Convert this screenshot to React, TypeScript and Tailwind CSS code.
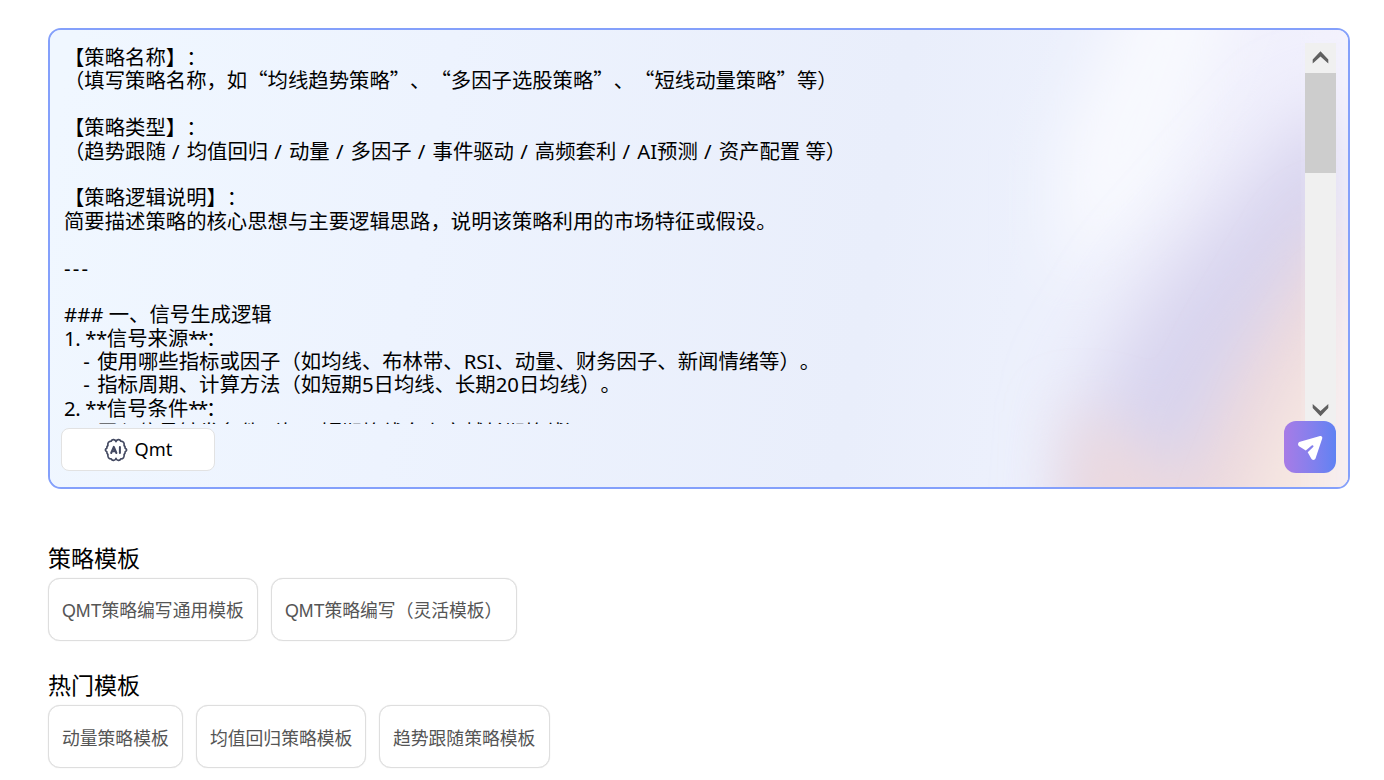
import React from 'react';

const LINES: string[] = [
  '【策略名称】：',
  '（填写策略名称，如“均线趋势策略”、“多因子选股策略”、“短线动量策略”等）',
  '',
  '【策略类型】：',
  '（趋势跟随 / 均值回归 / 动量 / 多因子 / 事件驱动 / 高频套利 / AI预测 / 资产配置 等）',
  '',
  '【策略逻辑说明】：',
  '简要描述策略的核心思想与主要逻辑思路，说明该策略利用的市场特征或假设。',
  '',
  '---',
  '',
  '### 一、信号生成逻辑',
  '1. **信号来源**：',
  '   - 使用哪些指标或因子（如均线、布林带、RSI、动量、财务因子、新闻情绪等）。',
  '   - 指标周期、计算方法（如短期5日均线、长期20日均线）。',
  '2. **信号条件**：',
  '   - 买入信号触发条件（如：短期均线向上穿越长期均线）',
];

function spacing(part: string) {
  if (part === '---') return 'tracking-[2.2px]';
  if (part === '   - ') return 'tracking-[1.1px]';
  if (part.includes('/')) return 'tracking-[0.9px]';
  if (part === '**') return 'tracking-[-2.4px]';
  if (part.endsWith('**')) return 'tracking-[-0.4px]';
  return '';
}

function Mixed({ text }: { text: string }) {
  return (
    <>
      {text.split(/( \/ |[\x20-\x7e]+)/).map((part, i) =>
        i % 2 ? (
          <span key={i} className={`font-['Noto_Sans',sans-serif] ${spacing(part)}`}>{part}</span>
        ) : (
          part
        ),
      )}
    </>
  );
}

function AiIcon() {
  return (
    <svg viewBox="0 0 24 24" className="h-6 w-6" fill="none" stroke="#434961" strokeWidth="1.7" strokeLinecap="round" strokeLinejoin="round">
      <path d="M12 3.600C11.400 1.200 8.200 0.700 7.200 3.100C4.900 3.100 3.400 4.900 3.900 7.500C2.900 8.400 2.700 9.300 2.800 10.300C0.900 11.300 0.900 12.700 2.800 13.700C2.700 14.700 2.900 15.600 3.900 16.500C3.400 19.100 4.900 20.900 7.200 20.900C8.200 23.300 11.400 22.800 12 20.400C12.600 22.800 15.800 23.300 16.800 20.900C19.100 20.900 20.600 19.100 20.100 16.500C21.100 15.600 21.300 14.700 21.200 13.700C23.100 12.700 23.100 11.300 21.200 10.300C21.300 9.300 21.100 8.400 20.100 7.500C20.600 4.900 19.100 3.100 16.800 3.100C15.800 0.700 12.600 1.200 12 3.600Z" />
      <path strokeWidth="2" d="M7.200 15L9.800 8.900L12.400 15M8.300 13.300H11.300M15.900 8.900V15" />
    </svg>
  );
}

function Card({ label, width }: { label: string; width: string }) {
  return (
    <button className={`h-[63px] ${width} rounded-[12px] border-[1.5px] border-[#dedede] bg-white pt-[2px] pl-[13px] text-left text-[17.8px] whitespace-nowrap text-[#555] shadow-[0_0_1px_#d8d8d8]`}>
      {label.startsWith('QMT') ? (
        <>
          <span className="font-['Liberation_Sans',sans-serif]">QMT</span>
          {label.slice(3)}
        </>
      ) : (
        label
      )}
    </button>
  );
}

export default function App() {
  return (
    <div className="h-[780px] w-[1384px] overflow-hidden bg-white pt-7 pl-12 font-['Noto_Sans_CJK_SC',sans-serif]">
      <section className="relative h-[461px] w-[1302px] overflow-hidden rounded-[13px] border-2 border-[#84a0fb] bg-[#ebf0fc]">
        <svg viewBox="0 0 1298 457" preserveAspectRatio="none" className="absolute inset-0 h-full w-full">
          <defs>
            <linearGradient id="base" gradientUnits="userSpaceOnUse" x1="0" y1="120" x2="1240" y2="330">
              <stop offset="0" stopColor="#f0f7ff" />
              <stop offset="0.3" stopColor="#edf3fe" />
              <stop offset="0.66" stopColor="#e9eefb" />
              <stop offset="0.78" stopColor="#ecf0fc" />
              <stop offset="0.9" stopColor="#f0f0fc" />
              <stop offset="1" stopColor="#f1f0fd" />
            </linearGradient>
            <filter id="soft" x="-60%" y="-60%" width="220%" height="220%">
              <feGaussianBlur stdDeviation="30" />
            </filter>
            <filter id="wide" x="-60%" y="-60%" width="220%" height="220%">
              <feGaussianBlur stdDeviation="38" />
            </filter>
          </defs>
          <rect width="1298" height="457" fill="url(#base)" />
          <path d="M1090 -60L1200 -60L1110 170L1010 250L1010 120Z" fill="#f8f9fe" filter="url(#soft)" />
          <path d="M1020 560L1035 370L1100 260L1260 80L1320 80L1320 560Z" fill="#d8d4ee" filter="url(#wide)" />
          <path d="M1015 580L1020 380L1075 400L1130 450L1190 330L1270 200L1340 180L1340 580Z" fill="#ecd9de" filter="url(#soft)" />
          <path d="M1180 520L1235 380L1300 270L1340 270L1340 520Z" fill="#f7e8e2" filter="url(#soft)" />
          <path d="M1292 -30L1360 -30L1360 520L1292 520Z" fill="#f6f4fd" filter="url(#soft)" />
        </svg>

        <div className="relative flex h-[394px] pt-[13px] pl-[14px]">
          <div className="h-[381px] w-[1241px] overflow-hidden pt-[2px] text-[20.36px] leading-[23.4px] text-black">
            {LINES.map((line, i) => (
              <div key={i} className="h-[23.4px] whitespace-pre [text-spacing-trim:space-all] last:mt-px">
                <Mixed text={line} />
              </div>
            ))}
          </div>
          <div className="flex h-[381px] w-[31px] flex-col items-center bg-[#f0f0f0]">
            <svg viewBox="0 0 31 30" className="h-[30px] w-[31px] shrink-0" fill="#606060">
              <path d="M15.500 8.300L23.300 16.500V20.600L15.500 13.600L7.700 20.600V16.500Z" />
            </svg>
            <div className="h-[100px] w-[31px] shrink-0 bg-[#cdcdcd]" />
            <div className="grow" />
            <svg viewBox="0 0 31 30" className="h-[30px] w-[31px] shrink-0" fill="#606060">
              <path d="M15.500 22.300L23.300 14.100V10L15.500 17L7.700 10V14.100Z" />
            </svg>
          </div>
        </div>

        <button className="absolute top-[398px] left-[11px] flex h-[43px] w-[154px] items-center justify-center gap-[7px] rounded-[8px] border-[1.5px] border-[#e2e2e2] bg-white pt-px font-['Noto_Sans',sans-serif] text-[18.2px] text-black">
          <AiIcon />
          Qmt
        </button>
        <button className="absolute top-[391px] left-[1234px] flex h-[52px] w-[52px] items-center justify-center rounded-[12px] bg-linear-to-r from-[#a77be6] to-[#5f82f3]">
          <svg viewBox="0 0 52 52" className="h-[52px] w-[52px]" fill="white">
            <path d="M36 15.100C37.600 14.800 38.700 16 38.200 17.600L31.600 37.300C30.900 39.400 28.100 39.600 27.200 37.600L23.700 31.200L29.200 26.100C30.200 25 28.900 23.500 27.700 24.500L21.800 29.500L15.400 25.600C13.400 24.300 13.700 21.500 16 20.800Z" />
          </svg>
        </button>
      </section>

      <h2 className="mt-[50px] mb-[3px] text-[23px] leading-9 text-black">策略模板</h2>
      <div className="flex gap-[13px]">
        <Card label="QMT策略编写通用模板" width="w-[210px]" />
        <Card label="QMT策略编写（灵活模板）" width="w-[246px]" />
      </div>
      <h2 className="mt-[25px] mb-[3px] text-[23px] leading-9 text-black">热门模板</h2>
      <div className="flex gap-[13px]">
        <Card label="动量策略模板" width="w-[135px]" />
        <Card label="均值回归策略模板" width="w-[170px]" />
        <Card label="趋势跟随策略模板" width="w-[171px]" />
      </div>
    </div>
  );
}
